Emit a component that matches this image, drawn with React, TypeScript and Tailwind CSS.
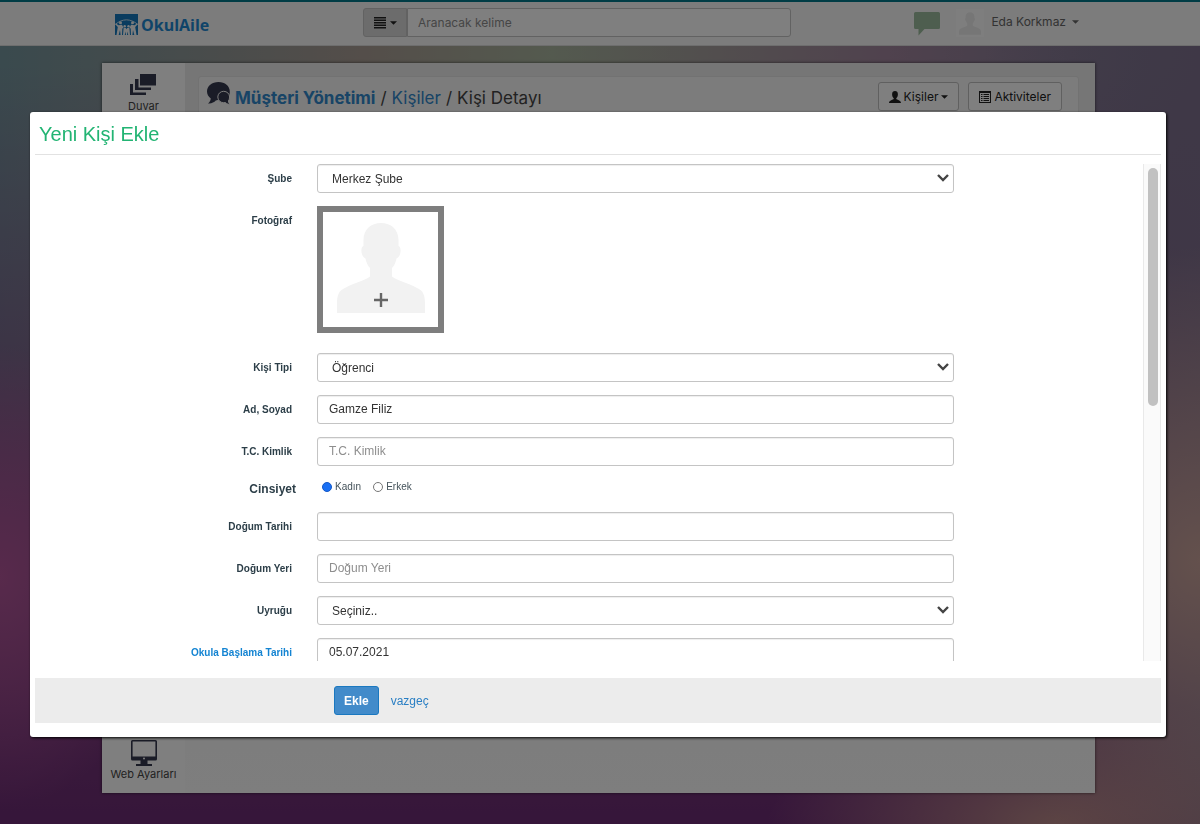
import { useState } from 'react'
import type { ReactNode } from 'react'

function LogoMark() {
  return (
    <svg viewBox="0 0 23 21" className="h-[21px] w-[23px]" aria-hidden="true">
      <path d="M0 0h23v21H0z" fill="#1478be" />
      <path
        d="M0 10.500C4 7.500 7 6 11.500 5.800 16 6 19 7.500 23 10.500"
        fill="none"
        stroke="#c4def0"
        strokeWidth="1"
      />
      <g fill="#f8f8f8">
        <circle cx="5.500" cy="8.800" r="1.500" />
        <circle cx="17.500" cy="8.800" r="1.500" />
        <circle cx="9.700" cy="12.300" r="1.200" />
        <circle cx="13.500" cy="12.300" r="1.200" />
        <path d="M1 9.500l2.500 1.800 3.500-.6 1.500 3-1.200.8-.3 6.500H5.600L5 16l-1.300 5H1.500l1.300-8L.5 10.500z" />
        <path d="M22 9.500l-2.500 1.800-3.500-.6-1.500 3 1.200.8.3 6.500h1.400L18 16l1.300 5h2.200l-1.300-8 2.300-2.500z" />
        <path d="M8.600 14h2.200l.7 1.200.7-1.200h2.200l.6 7h-1.800l-.6-3.500-.6 3.500h-1l-.6-3.500-.6 3.500H8z" />
      </g>
    </svg>
  )
}

function Caret() {
  return (
    <svg viewBox="0 0 8 4" className="h-1 w-[7px]" fill="currentColor" aria-hidden="true">
      <path d="M0 0h8L4 4z" />
    </svg>
  )
}

function MenuLines() {
  return (
    <svg viewBox="0 0 12 12" className="size-3" fill="currentColor" aria-hidden="true">
      <path d="M0 0h12v1.500H0zM0 2.500h12V4H0zM0 5h12v1.500H0zM0 7.500h12V9H0zM0 10h12v1.500H0z" />
    </svg>
  )
}

function SpeechIcon() {
  return (
    <svg viewBox="0 0 26 24" className="h-6 w-[26px]" fill="#9cbd9e" aria-hidden="true">
      <path d="M1.500 0h23A1.500 1.500 0 0 1 26 1.500v14a1.500 1.500 0 0 1-1.500 1.500H10.500L4.500 23.500V17h-3A1.500 1.500 0 0 1 0 15.500v-14A1.500 1.500 0 0 1 1.500 0z" />
    </svg>
  )
}

function WallIcon() {
  return (
    <svg viewBox="0 0 26 21" className="h-[21px] w-[26px]" fill="#34384e" aria-hidden="true">
      <path d="M10 0h16v11.500H10z" />
      <path d="M5 5h3.500v8.500H21V16H5z" />
      <path d="M0 10h3v8.500h13V21H0z" />
    </svg>
  )
}

function ScreenIcon() {
  return (
    <svg viewBox="0 0 26 26" className="size-[26px]" fill="#34384e" aria-hidden="true">
      <path
        fillRule="evenodd"
        d="M1.500 0h23A1.500 1.500 0 0 1 26 1.500V19a1.500 1.500 0 0 1-1.500 1.500H16.500V24H21v2H5v-2h4.500v-3.500h-8A1.500 1.500 0 0 1 0 19V1.500A1.500 1.500 0 0 1 1.500 0zM1.600 1.600v15h22.800v-15zM13 17.600a1 1 0 1 0 0 2 1 1 0 0 0 0-2z"
      />
    </svg>
  )
}

function ChatHeads() {
  return (
    <svg viewBox="0 0 23 23" className="size-[23px]" fill="#34384e" aria-hidden="true">
      <path d="M11.500 0C5 0 0 4 0 9.500c0 3 1.500 5.300 3.800 7-.2 2.200-1.200 3.600-2.800 4.900 3.500.3 6-.7 7.800-2.800l9.500-2.600 4-2.500c.3-1.200.5-2.600.5-4C22.800 4 18 0 11.500 0z" />
      <path
        d="M16.700 9.300c-3.300 0-5.900 2.500-5.900 5.700s2.600 5.700 5.900 5.700c.6 0 1.200-.1 1.700-.2 1.200 1.300 2.700 1.900 4.600 1.700-1-.8-1.500-1.900-1.600-3.200.8-1 1.200-2.500 1.200-4 0-3.200-2.600-5.700-5.900-5.700z"
        stroke="#f8f8f8"
        strokeWidth="1"
      />
    </svg>
  )
}

function UserGlyph() {
  return (
    <svg viewBox="0 0 12 12" className="size-3" fill="currentColor" aria-hidden="true">
      <path d="M6 0C4.200 0 3.100 1.200 3.100 3.200c0 1.900.7 3.300 1.600 4v.9c-.3.700-4.700 1.200-4.700 3.900h12c0-2.700-4.400-3.200-4.700-3.900v-.9c.9-.7 1.600-2.100 1.600-4C8.900 1.200 7.800 0 6 0z" />
    </svg>
  )
}

function ListGlyph() {
  return (
    <svg viewBox="0 0 12 12" className="size-3" fill="currentColor" aria-hidden="true">
      <path fillRule="evenodd" d="M0 0h12v12H0zM1 2v9h10V2z" />
      <path d="M2 3h1.500v1H2zM4.500 3H10v1H4.500zM2 5h1.500v1H2zM4.500 5H10v1H4.500zM2 7h1.500v1H2zM4.500 7H10v1H4.500zM2 9h1.500v1H2zM4.500 9H10v1H4.500z" />
    </svg>
  )
}

function Silhouette({ className }: { className: string }) {
  return (
    <svg viewBox="0 0 88 90" className={className} fill="currentColor" aria-hidden="true">
      <path d="M44 0C34 0 26.500 6.500 26.500 17v6c-3.500 1-2.500 11 2 12.500.8 4 2 7 4.500 9.500v8.500C27 58 13 61 4.500 67 1.500 69 0 74 0 80v10h88V80c0-6-1.500-11-4.500-13-8.500-6-22.500-9-28.500-13.500V45c2.500-2.500 3.700-5.500 4.500-9.500 4.500-1.500 5.500-11.500 2-12.500v-6C61.500 6.500 54 0 44 0z" />
    </svg>
  )
}

const inputClass =
  'block h-[29px] w-full rounded-[3px] border border-[#c4c4c4] bg-white px-[11px] pb-0.5 text-xs text-[#333] shadow-[inset_0_1px_1px_rgba(0,0,0,0.07)] outline-none placeholder:text-[#8e8e8e]'

interface RowProps {
  id: string
  label: string
  highlight?: boolean
  children: ReactNode
}

function Row({ id, label, highlight, children }: RowProps) {
  return (
    <div className="grid grid-cols-[257px_minmax(0,1fr)] gap-x-[25px]">
      <label
        htmlFor={id}
        className={`text-right text-[10px] leading-[29px] font-bold ${highlight ? 'text-[#1484d2]' : 'text-[#2c3e48]'}`}
      >
        {label}
      </label>
      {children}
    </div>
  )
}

function SelectBox({ id, option }: { id: string; option: string }) {
  return (
    <div className="relative">
      <select
        id={id}
        className="block h-[29px] w-full appearance-none rounded-[3px] border border-[#c4c4c4] bg-white px-[14px] text-xs text-[#333] shadow-[inset_0_1px_1px_rgba(0,0,0,0.07)] outline-none"
      >
        <option>{option}</option>
      </select>
      <svg
        viewBox="0 0 12 8"
        className="pointer-events-none absolute top-[10px] right-[5px] h-2 w-3"
        fill="none"
        stroke="#444"
        strokeWidth="2.400"
        aria-hidden="true"
      >
        <path d="M1 1l5 5 5-5" />
      </svg>
    </div>
  )
}

function Header() {
  return (
    <header className="flex h-[46px] items-start border-t-2 border-b border-t-[#00798a] border-b-[#dcdcdc] bg-[#f8f8f8] pr-[121px] pl-[115px]">
      <a href="#" className="mt-3 flex w-[248px] shrink-0 items-center gap-[3px]">
        <LogoMark />
        <span className="pt-px font-['Open_Sans',sans-serif] text-base leading-5 font-bold text-[#1e88d2]">
          OkulAile
        </span>
      </a>
      <form className="mt-1.5 flex h-[29px] w-[428px]">
        <button
          type="button"
          aria-label="Arama türü"
          className="flex w-[44px] items-center justify-center gap-1 rounded-l-[3px] border border-[#c4c4c4] bg-[#d8d8d8] text-[#222]"
        >
          <MenuLines />
          <Caret />
        </button>
        <input
          type="text"
          aria-label="Aranacak kelime"
          placeholder="Aranacak kelime"
          className="min-w-0 flex-1 rounded-r-[3px] border border-[#c4c4c4] bg-white px-2.5 text-xs outline-none placeholder:text-[#8c8c8c]"
        />
      </form>
      <div className="ml-auto flex items-start">
        <button type="button" aria-label="Mesajlar" className="mt-[10px]">
          <SpeechIcon />
        </button>
        <span className="mt-[7px] ml-4 flex size-7 items-end justify-center bg-[#fdfdfd] p-0.5 text-[#ececec]">
          <Silhouette className="h-[23px] w-[22px]" />
        </span>
        <button
          type="button"
          className="mt-3 ml-[7px] flex items-center gap-[6px] text-xs leading-4 text-[#666]"
        >
          Eda Korkmaz
          <Caret />
        </button>
      </div>
    </header>
  )
}

function Page() {
  const action =
    'flex h-[29px] items-center gap-[3px] rounded-[3px] border border-[#c0c0c0] bg-white px-[10px] text-xs text-[#222]'

  return (
    <div className="flex min-h-screen flex-col bg-[radial-gradient(ellipse_22%_38%_at_100%_68%,#c8a29a,transparent),radial-gradient(ellipse_24%_16%_at_88%_100%,#b88888,transparent),linear-gradient(to_right,transparent_82%,rgba(128,112,142,0.9)),radial-gradient(ellipse_14%_28%_at_0%_70%,#b05498,transparent),linear-gradient(to_bottom,transparent_8%,#7c3c7c_78%,#6c2c74),linear-gradient(to_right,#74949c,#a89c94_30%,#a8b49e_46%,#a0849c_74%,#747890)] font-[Inter,sans-serif]">
      <Header />
      <div className="mt-[17px] mr-[105px] mb-[31px] ml-[102px] flex flex-1 bg-[linear-gradient(#ececec,#fcfcfc)] shadow-[0_0_3px_rgba(0,0,0,0.6)]">
        <nav className="flex w-[83px] flex-col items-center justify-between bg-[#fefefe] pt-[11px] pb-[11px] text-[11px] leading-4 text-[#444]">
          <a href="#" className="flex flex-col items-center gap-[3px]">
            <WallIcon />
            Duvar
          </a>
          <a href="#" className="flex flex-col items-center">
            <ScreenIcon />
            Web Ayarları
          </a>
        </nav>
        <main className="flex flex-1 flex-col pt-[13px] pr-4 pl-[13px]">
          <section className="flex h-[600px] items-start rounded-[3px] border border-[#e4e4e4] bg-[#f8f8f8] pt-[5px] pr-4 pl-2">
            <ChatHeads />
            <h1 className="mt-1 ml-[5px] flex gap-[5px] text-[17px] leading-6 text-[#444]">
              <a href="#" className="font-bold text-[#3088cc]">
                Müşteri Yönetimi
              </a>
              /
              <a href="#" className="text-[#3088cc]">
                Kişiler
              </a>
              / <span>Kişi Detayı</span>
            </h1>
            <div className="ml-auto flex gap-[9px]">
              <button type="button" className={action}>
                <UserGlyph />
                Kişiler
                <Caret />
              </button>
              <button type="button" className={action}>
                <ListGlyph />
                Aktiviteler
              </button>
            </div>
          </section>
        </main>
      </div>
    </div>
  )
}

function GenderRow() {
  const [gender, setGender] = useState('Kadın')

  return (
    <div
      role="radiogroup"
      aria-labelledby="gender-label"
      className="grid h-5 grid-cols-[261px_minmax(0,1fr)] gap-x-[26px]"
    >
      <span id="gender-label" className="text-right text-xs leading-5 font-bold text-[#2c3e48]">
        Cinsiyet
      </span>
      <div className="flex items-start gap-3">
        {['Kadın', 'Erkek'].map((value) => (
          <label key={value} className="flex items-center gap-[3px] text-[10px] leading-4 text-[#44525a]">
            <input
              type="radio"
              name="gender"
              checked={gender === value}
              onChange={() => setGender(value)}
              className="size-[10px] appearance-none rounded-full border border-[#767676] bg-white checked:border-[#1458c8] checked:bg-[#1a70f4]"
            />
            {value}
          </label>
        ))}
      </div>
    </div>
  )
}

function PersonDialog() {
  return (
    <div className="fixed inset-0 bg-black/50 pt-28 pr-[34px] pl-[30px] font-['Liberation_Sans',Arial,sans-serif]">
      <div
        role="dialog"
        aria-modal="true"
        aria-labelledby="dialog-title"
        className="rounded-[3px] bg-white px-[5px] pb-[14px] shadow-[1px_1px_3px_#000]"
      >
        <h2
          id="dialog-title"
          className="border-b border-[#e2e2e2] px-1 pt-2 pb-[6px] text-xl leading-7 text-[#22b473]"
        >
          Yeni Kişi Ekle
        </h2>

        <form>
          <div className="mt-[9px] flex h-[497px] overflow-hidden">
            <div className="flex flex-1 flex-col gap-[13px] pr-[189px]">
              <Row id="branch" label="Şube">
                <SelectBox id="branch" option="Merkez Şube" />
              </Row>
              <Row id="photo" label="Fotoğraf">
                <div className="pb-[7px]">
                  <button
                    id="photo"
                    type="button"
                    className="relative flex size-[127px] justify-center border-[6px] border-[#7e7e7e] bg-white pt-[11px] text-[#f2f2f2]"
                  >
                    <Silhouette className="h-[90px] w-[88px]" />
                    <svg
                      viewBox="0 0 14 14"
                      className="absolute bottom-[20px] left-[51px] size-[14px]"
                      stroke="#666"
                      strokeWidth="2.400"
                      aria-hidden="true"
                    >
                      <path d="M7 0v14M0 7h14" />
                    </svg>
                  </button>
                </div>
              </Row>
              <Row id="type" label="Kişi Tipi">
                <SelectBox id="type" option="Öğrenci" />
              </Row>
              <Row id="name" label="Ad, Soyad">
                <input id="name" type="text" defaultValue="Gamze Filiz" className={inputClass} />
              </Row>
              <Row id="identity" label="T.C. Kimlik">
                <input id="identity" type="text" placeholder="T.C. Kimlik" className={inputClass} />
              </Row>
              <GenderRow />
              <Row id="birthdate" label="Doğum Tarihi">
                <input id="birthdate" type="text" className={inputClass} />
              </Row>
              <Row id="birthplace" label="Doğum Yeri">
                <input id="birthplace" type="text" placeholder="Doğum Yeri" className={inputClass} />
              </Row>
              <Row id="nationality" label="Uyruğu">
                <SelectBox id="nationality" option="Seçiniz.." />
              </Row>
              <Row id="start" label="Okula Başlama Tarihi" highlight>
                <input id="start" type="text" defaultValue="05.07.2021" className={inputClass} />
              </Row>
            </div>
            {/* Scroll track */}
            <div className="w-[18px] shrink-0 border-x border-[#e9e9e9] bg-[#fafafa] px-1 pt-1">
              <div className="h-[238px] w-[10px] rounded-full bg-[#c1c1c1]" />
            </div>
          </div>

          <div className="mt-[17px] flex h-[45px] items-center gap-3 bg-[#ececec] pl-[299px] text-xs">
            <button
              type="submit"
              className="h-[29px] rounded-[3px] border border-[#1a78c0] bg-[#428bca] px-[9px] font-bold text-white"
            >
              Ekle
            </button>
            <a href="#" className="text-[#2a7fc4]">
              vazgeç
            </a>
          </div>
        </form>
      </div>
    </div>
  )
}

export default function App() {
  return (
    <>
      <Page />
      <PersonDialog />
    </>
  )
}
